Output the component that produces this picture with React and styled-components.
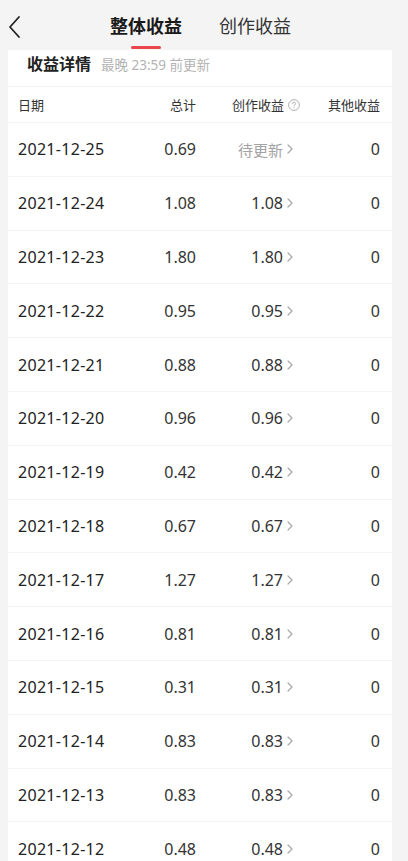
import React from 'react';
import styled, { createGlobalStyle } from 'styled-components';

const Global = createGlobalStyle`
  html, body { margin: 0; padding: 0; background: #f4f4f4; overflow: hidden; height: 861px; }
  body { font-family: "Noto Sans", "Noto Sans CJK SC", sans-serif; -webkit-font-smoothing: antialiased; }
  * { box-sizing: border-box; }
`;

const Page = styled.div`
  width: 408px;
  height: 861px;
  overflow: hidden;
  background: #f4f4f4;
`;

const NavBar = styled.div`
  height: 50px;
  display: flex;
  align-items: flex-start;
  padding-left: 8px;
`;

const Back = styled.button`
  border: 0;
  background: none;
  padding: 0;
  margin-top: 15px;
  width: 13px;
  height: 24px;
  display: flex;
  cursor: pointer;
`;

const Tabs = styled.div`
  display: flex;
  gap: 37px;
  margin-left: 89px;
`;

const Tab = styled.div`
  display: flex;
  flex-direction: column;
  align-items: center;
  padding-top: 13px;
`;

const TabLabel = styled.span`
  font-family: "Noto Sans CJK SC", sans-serif;
  font-size: 18px;
  line-height: 24px;
  font-weight: ${(p) => (p.$active ? 700 : 400)};
  color: ${(p) => (p.$active ? '#1a1a1a' : '#333')};
`;

const Indicator = styled.span`
  margin-top: 9px;
  width: 30px;
  height: 3px;
  border-radius: 2px;
  background: ${(p) => (p.$active ? '#e8454c' : 'transparent')};
`;

const Card = styled.div`
  margin-left: 8px;
  width: 384px;
  background: #fff;
`;

const TitleRow = styled.div`
  height: 37px;
  padding: 1px 0 0 19px;
  display: flex;
  align-items: baseline;
  gap: 10px;
  border-bottom: 1px solid #f4f4f4;
`;

const Title = styled.span`
  font-family: "Noto Sans CJK SC", sans-serif;
  font-size: 16px;
  line-height: 24px;
  font-weight: 700;
  color: #222;
`;

const Sub = styled.span`
  font-family: "Noto Sans", "Noto Sans CJK SC", sans-serif;
  font-size: 13.5px;
  color: #b3b3b3;
`;

const Row = styled.div`
  display: grid;
  grid-template-columns: 110px 68px 104px 80px;
  align-items: center;
  padding: 0 12px 0 10px;
  height: ${(p) => (p.$head ? '36px' : '53.8px')};
  border-bottom: 1px solid #f4f4f4;
`;

const HeadCell = styled.div`
  font-family: "Noto Sans CJK SC", sans-serif;
  font-size: 13px;
  color: #333;
  display: flex;
  align-items: center;
  justify-content: ${(p) => (p.$left ? 'flex-start' : 'flex-end')};
  gap: 4px;
`;

const Cell = styled.div`
  font-size: 16px;
  letter-spacing: ${(p) => (p.$date ? '0.3px' : '0')};
  color: ${(p) => (p.$date ? '#222' : '#333')};
  display: flex;
  align-items: center;
  justify-content: ${(p) => (p.$left ? 'flex-start' : 'flex-end')};
  padding-right: ${(p) => (p.$link ? '7px' : '0')};
  gap: 4px;
`;

const Pending = styled.span`
  font-family: "Noto Sans CJK SC", sans-serif;
  font-size: 15px;
  color: #a3a3a3;
`;

const Chevron = () => (
  <svg width="6" height="10" viewBox="0 0 6 10" fill="none">
    <path d="M1 1l4 4-4 4" stroke="#a8a8a8" strokeWidth="1.2" strokeLinecap="round" strokeLinejoin="round" />
  </svg>
);

const Help = () => (
  <svg width="12" height="12" viewBox="0 0 12 12" fill="none">
    <circle cx="6" cy="6" r="5.4" stroke="#a8a8a8" strokeWidth="0.9" />
    <path d="M4.5 4.7a1.5 1.5 0 1 1 2.2 1.3c-.5.3-.7.6-.7 1.1" stroke="#a8a8a8" strokeWidth="0.9" strokeLinecap="round" />
    <circle cx="6" cy="8.8" r="0.55" fill="#a8a8a8" />
  </svg>
);

const data = [
  ['2021-12-25', '0.69', null],
  ['2021-12-24', '1.08', '1.08'],
  ['2021-12-23', '1.80', '1.80'],
  ['2021-12-22', '0.95', '0.95'],
  ['2021-12-21', '0.88', '0.88'],
  ['2021-12-20', '0.96', '0.96'],
  ['2021-12-19', '0.42', '0.42'],
  ['2021-12-18', '0.67', '0.67'],
  ['2021-12-17', '1.27', '1.27'],
  ['2021-12-16', '0.81', '0.81'],
  ['2021-12-15', '0.31', '0.31'],
  ['2021-12-14', '0.83', '0.83'],
  ['2021-12-13', '0.83', '0.83'],
  ['2021-12-12', '0.48', '0.48'],
];

export default function App() {
  return (
    <Page>
      <Global />
      <NavBar>
        <Back aria-label="返回">
          <svg width="13" height="24" viewBox="0 0 13 24" fill="none">
            <path d="M11 2L2 12l9 10" stroke="#222" strokeWidth="1.8" strokeLinecap="round" strokeLinejoin="round" />
          </svg>
        </Back>
        <Tabs>
          <Tab>
            <TabLabel $active>整体收益</TabLabel>
            <Indicator $active />
          </Tab>
          <Tab>
            <TabLabel>创作收益</TabLabel>
            <Indicator />
          </Tab>
        </Tabs>
      </NavBar>
      <Card>
        <TitleRow>
          <Title>收益详情</Title>
          <Sub>最晚 23:59 前更新</Sub>
        </TitleRow>
        <Row $head>
          <HeadCell $left>日期</HeadCell>
          <HeadCell>总计</HeadCell>
          <HeadCell>创作收益<Help /></HeadCell>
          <HeadCell>其他收益</HeadCell>
        </Row>
        {data.map(([d, t, c]) => (
          <Row key={d}>
            <Cell $left $date>{d}</Cell>
            <Cell>{t}</Cell>
            <Cell $link>
              {c === null ? <Pending>待更新</Pending> : c}
              <Chevron />
            </Cell>
            <Cell>0</Cell>
          </Row>
        ))}
      </Card>
    </Page>
  );
}
